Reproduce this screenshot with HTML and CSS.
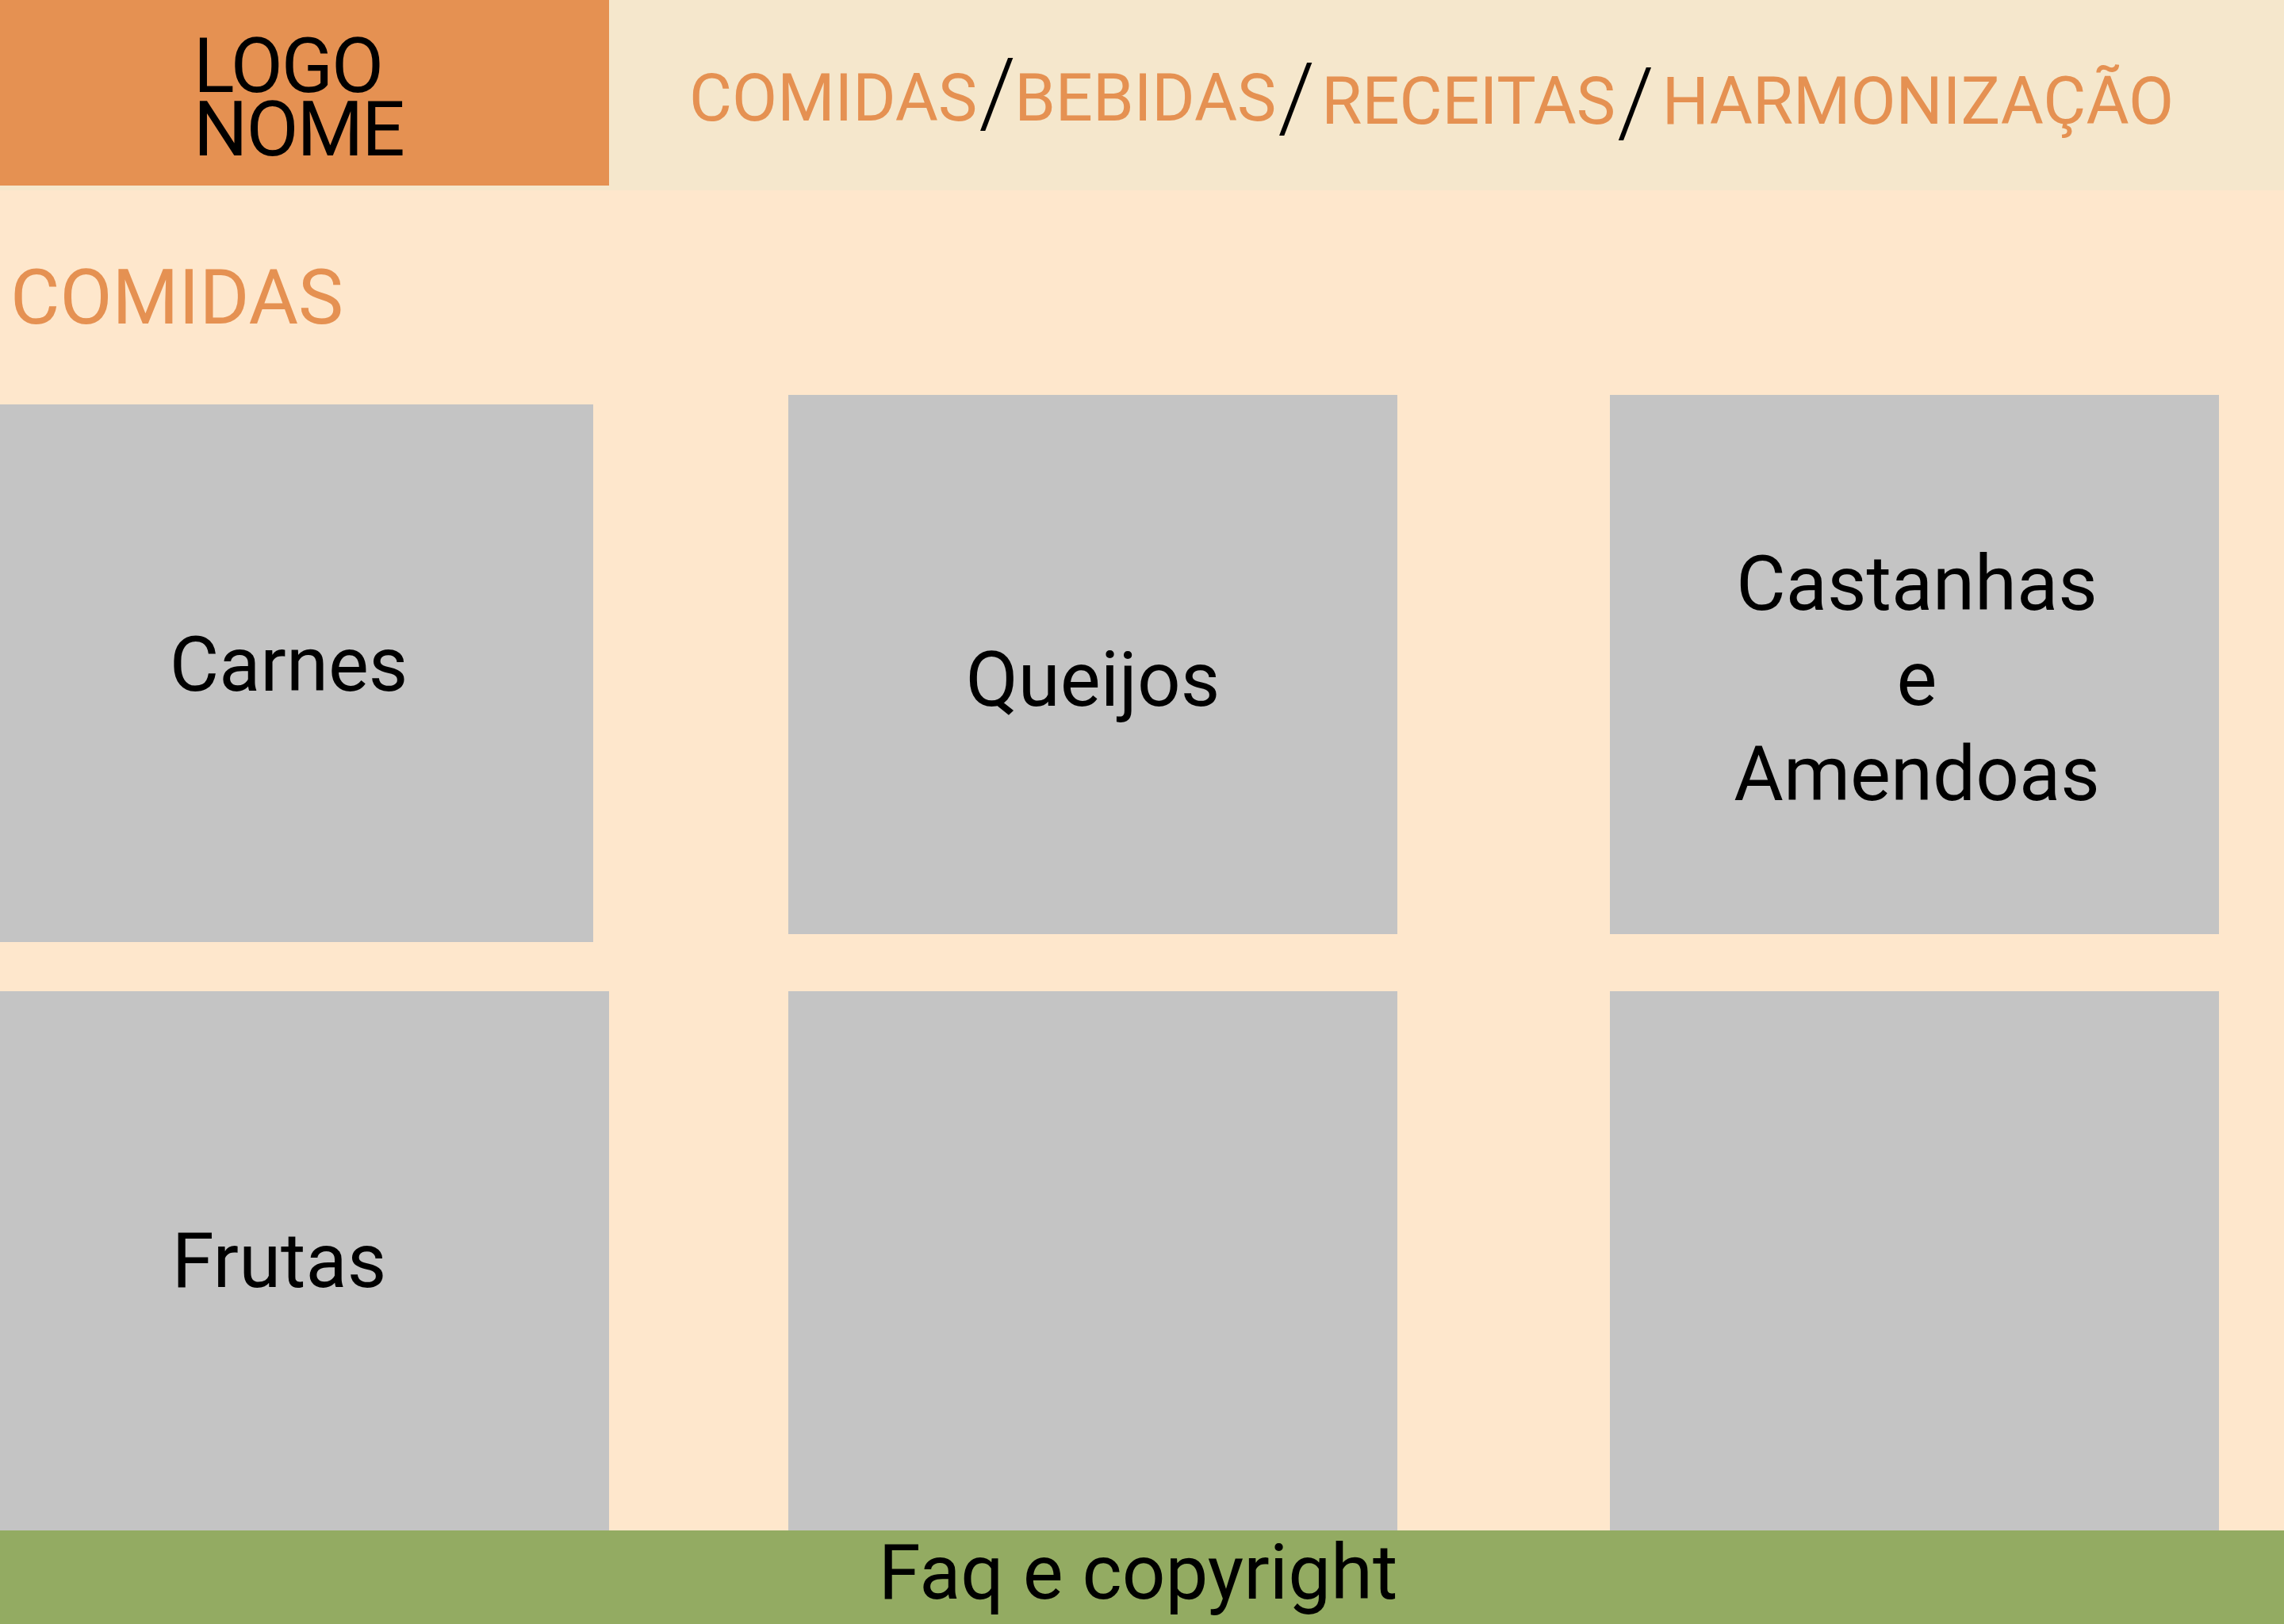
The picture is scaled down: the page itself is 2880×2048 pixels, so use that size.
FILE: index.html
```html
<!DOCTYPE html>
<html lang="pt-BR">
<head>
    <meta charset="UTF-8">
    <meta name="viewport" content="width=device-width, initial-scale=1.0">
    <title>Comidas</title>
    <link rel="stylesheet" href="styles.css">
</head>
<body>

    <!-- Topo: logo + menu -->
    <header class="header">
        <div class="logo">
            <div class="logo-line">LOGO</div>
            <div class="logo-line">NOME</div>
        </div>
        <nav class="nav">
            <a href="#" class="nav-item">COMIDAS</a><span class="sep">/</span><a href="#" class="nav-item">BEBIDAS</a><span class="sep sep-2">/</span><a href="#" class="nav-item low">RECEITAS</a><span class="sep sep-3">/</span><a href="#" class="nav-item low">HARMONIZAÇÃO</a>
        </nav>
    </header>

    <main class="main">
        <h1 class="title">COMIDAS</h1>

        <div class="grid">
            <a href="#" class="card card-carnes">Carnes</a>
            <a href="#" class="card card-queijos">Queijos</a>
            <a href="#" class="card card-castanhas">Castanhas<br>e<br>Amendoas</a>
            <a href="#" class="card card-frutas">Frutas</a>
            <a href="#" class="card"></a>
            <a href="#" class="card"></a>
        </div>
    </main>

    <footer class="footer">
        <span class="footer-text">Faq e copyright</span>
    </footer>

</body>
</html>
```

FILE: styles.css
```css
body {
    margin: 0;
    padding: 0;
    font-family: Roboto, "Liberation Sans", Arial, sans-serif;
    background-color: #fee7cc; /* peach background */
    color: #000;
    height: 2048px;
    overflow: hidden;
}
.header {
    display: flex;
    height: 240px;
    background-color: #f5e7cc;
}
.logo {
    width: 768px;
    height: 234px;
    box-sizing: border-box;
    padding: 43px 0 0 244px;
    background-color: #e59152;
    font-size: 96px;
    letter-spacing: -2px;
}
.logo-line {
    height: 80px;
    line-height: 80px;
}
.nav {
    padding: 82px 0 0 101px;
    font-size: 83px;
    line-height: 83px;
    white-space: nowrap;
}
.nav-item {
    color: #e59152;
    text-decoration: none;
    line-height: 0;
}
.nav-item.low {
    vertical-align: -4px;
}
.sep {
    display: inline-block;
    font-size: 118px;
    font-weight: 300;
    line-height: 0;
    color: #000;
    margin: 0 -2px 0 2px;
    vertical-align: -6px;
}
.sep-2 {
    vertical-align: -12px;
    margin-right: 8px;
}
.sep-3 {
    vertical-align: -18px;
    margin-right: 10px;
}
.main {
    display: flex;
    flex-direction: column;
}
.title {
    margin: 0;
    padding: 79px 0 0 13px;
    font-size: 96px;
    font-weight: 400;
    line-height: 112px;
    color: #e59152;
}
.grid {
    display: grid;
    grid-template-columns: 994px 1036px 768px;
    grid-auto-rows: 680px;
    row-gap: 72px;
    margin-top: 67px;
}
.card {
    width: 768px;
    box-sizing: border-box;
    background-color: #c4c4c4;
    display: flex;
    align-items: center;
    justify-content: center;
    text-align: center;
    font-size: 96px;
    line-height: 120px;
    color: #000;
    text-decoration: none;
}
.card-carnes {
    width: 748px;
    height: 678px;
    margin-top: 12px;
    padding: 0 20px 22px 0;
}
.card-queijos {
    padding-top: 38px;
}
.card-castanhas {
    padding: 36px 0 0 6px;
}
.card-frutas {
    padding-right: 64px;
}
.footer {
    height: 118px;
    box-sizing: border-box;
    padding: 0 10px 12px 0;
    background-color: #93ab62;
    text-align: center;
}
.footer-text {
    font-size: 96px;
    line-height: 106px;
}
```
